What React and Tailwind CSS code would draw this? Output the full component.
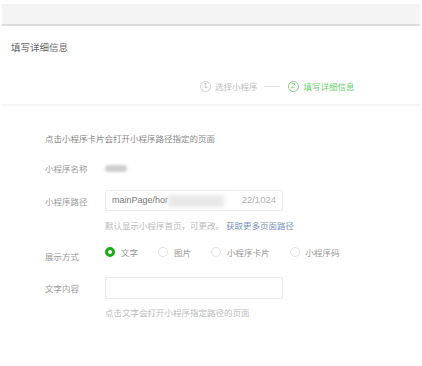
import React from "react";

const font = { fontFamily: '"Noto Sans CJK SC", "Noto Sans", sans-serif' };

function Radio({ checked, label }) {
  return (
    <div className="flex items-center mr-[20px]">
      {checked ? (
        <span className="w-[10px] h-[10px] rounded-full border-[3px] border-[#1aad19] bg-white box-border" />
      ) : (
        <span className="w-[10px] h-[10px] rounded-full border border-[#e2e2e2] bg-white box-border" />
      )}
      <span className="ml-[6px] text-[8.5px] leading-[12px] text-[#999]">{label}</span>
    </div>
  );
}

export default function App() {
  return (
    <div className="w-[422px] h-[366px] bg-white pt-[4px] px-[2px] overflow-hidden" style={font}>
      <div className="h-[22px] bg-[#f4f4f4] border-b-2 border-[#dcdcdc]" />
      <div className="mt-[15px] pl-[9px] text-[9.5px] leading-[12px] text-[#666]">填写详细信息</div>
      <div className="mt-[27px] pl-[198px] flex items-center h-[12px]">
        <span className="w-[11px] h-[11px] rounded-full border border-[#cfcfcf] flex items-center justify-center text-[7.5px] leading-none text-[#b5b5b5]" style={{ fontFamily: '"Liberation Sans", sans-serif' }}>1</span>
        <span className="ml-[4px] text-[8.5px] leading-[12px] text-[#bdbdbd]">选择小程序</span>
        <span className="ml-[6px] w-[16px] h-px bg-[#e0e0e0]" />
        <span className="ml-[8px] w-[11px] h-[11px] rounded-full border border-[#7fd47f] flex items-center justify-center text-[7.5px] leading-none text-[#6ccb6c]" style={{ fontFamily: '"Liberation Sans", sans-serif' }}>2</span>
        <span className="ml-[5px] text-[8.5px] leading-[12px] text-[#6ccb6c]">填写详细信息</span>
      </div>
      <div className="mt-[12px] border-b-2 border-[#f5f5f5]" />
      <div className="pl-[43px]">
        <div className="mt-[26px] text-[8.5px] leading-[12px] text-[#888]">点击小程序卡片会打开小程序路径指定的页面</div>
        <div className="mt-[18px] flex items-center h-[12px]">
          <span className="w-[60px] text-[8.5px] leading-[12px] text-[#999]">小程序名称</span>
          <span className="w-[22px] h-[7px] bg-[#cdcdcd] blur-[1.5px] rounded-sm" />
        </div>
        <div className="mt-[16px] flex items-center">
          <span className="w-[60px] text-[8.5px] leading-[12px] text-[#999]">小程序路径</span>
          <div className="w-[178px] h-[21px] border border-[#ececec] rounded-[2px] flex items-center pl-[6px] pr-[6px] box-border">
            <span className="text-[9px] text-[#777]" style={{ fontFamily: '"Liberation Sans", sans-serif' }}>mainPage/hor</span>
            <span className="w-[56px] h-[12px] bg-[#e8e8e8] blur-[2px]" />
            <span className="ml-auto text-[9.5px] text-[#b0b0b0]" style={{ fontFamily: '"Liberation Sans", sans-serif' }}>22/1024</span>
          </div>
        </div>
        <div className="mt-[8px] pl-[60px] text-[8.5px] leading-[12px] text-[#bbb]">
          默认显示小程序首页，可更改。 <span className="text-[#7a92c4]">获取更多页面路径</span>
        </div>
        <div className="mt-[15px] flex items-start">
          <span className="w-[60px] pt-[4px] text-[8.5px] leading-[12px] text-[#999]">展示方式</span>
          <div className="flex items-center h-[12px]">
            <Radio checked label="文字" />
            <Radio label="图片" />
            <Radio label="小程序卡片" />
            <Radio label="小程序码" />
          </div>
        </div>
        <div className="mt-[15px] flex items-center">
          <span className="w-[60px] text-[8.5px] leading-[12px] text-[#999]">文字内容</span>
          <div className="w-[178px] h-[22px] border border-[#ececec] rounded-[2px] box-border" />
        </div>
        <div className="mt-[7px] pl-[60px] text-[8.5px] leading-[12px] text-[#bbb]">点击文字会打开小程序指定路径的页面</div>
      </div>
    </div>
  );
}
